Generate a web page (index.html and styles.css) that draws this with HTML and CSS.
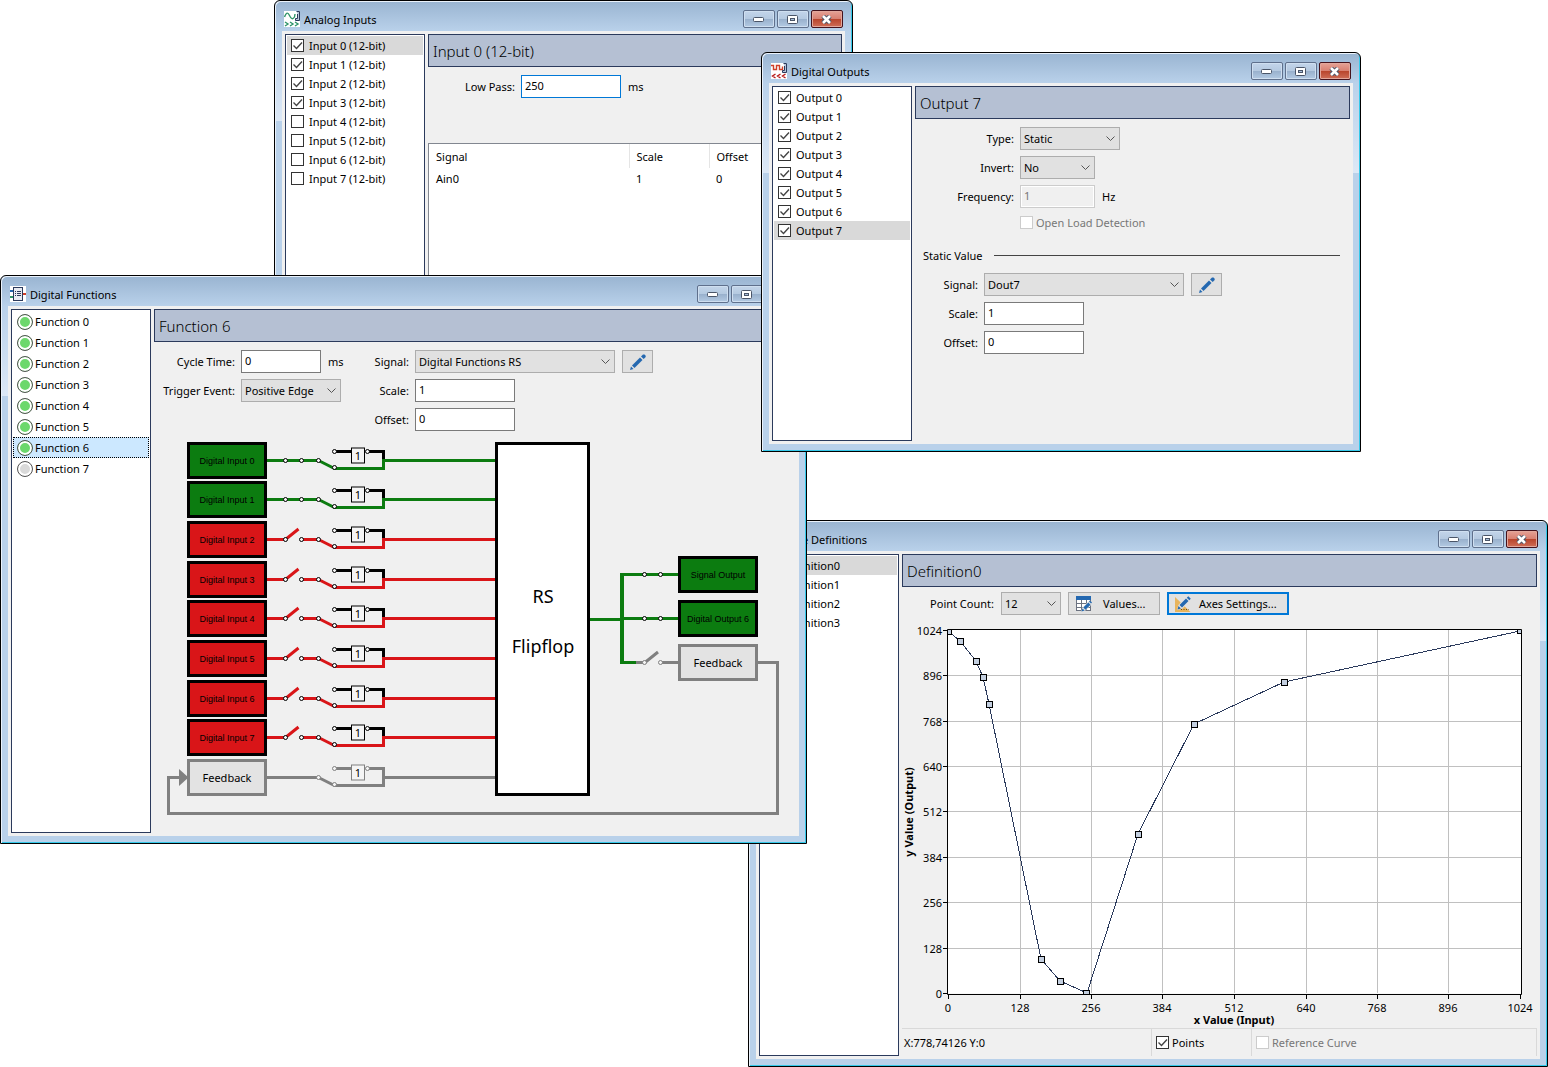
FILE: index.html
```html
<!DOCTYPE html>
<html lang="en">
<head>
    <meta charset="utf-8">
    <title>I/O Configuration</title>
    <link rel="stylesheet" href="styles.css">
</head>
<body>
    <!-- Shared icons -->
    <svg class="sprite" aria-hidden="true">
        <symbol id="icon-min" viewBox="0 0 11 5"><rect x="0.5" y="0.5" width="10" height="4" rx="1" fill="#fff" stroke="#4a5568"/></symbol>
        <symbol id="icon-max" viewBox="0 0 11 9"><rect x="0.5" y="0.5" width="10" height="8" rx="1" fill="#fff" stroke="#4a5568"/><rect x="3.5" y="3.5" width="4" height="2" fill="#a9bfda" stroke="#4a5568"/></symbol>
        <symbol id="icon-close" viewBox="0 0 11 9"><path d="M2 1.2l7 6.6M9 1.2l-7 6.6" stroke="#4a5568" stroke-width="4.600"/><path d="M2 1l7 7M9 1l-7 7" stroke="#fff" stroke-width="2.600"/></symbol>
        <symbol id="icon-pencil" viewBox="0 0 16 16"><path d="M0 16l1-3.500 2.500 2.500z" fill="#2468b0"/><path d="M2 11.500l8-8 2.500 2.500-8 8z" fill="#2468b0"/><path d="M11 2.500L13 0.500h1.500l1.200 1.200V3l-2 2z" fill="#2468b0"/></symbol>
        <symbol id="switch-wires" viewBox="0 0 350 40" overflow="visible">
            <path d="M180 -9h17M215 -9h14.500V0" class="wire-bypass"/>
            <path d="M164.500 0L180.500 8H229.500V0H341" class="wire"/>
            <rect x="197.500" y="-12.500" width="13" height="15" class="inverter"/>
            <circle cx="164.500" cy="0" r="2" class="node"/>
            <circle cx="180.500" cy="-9" r="2" class="node"/>
            <circle cx="180.500" cy="7" r="2" class="node"/>
            <circle cx="213.500" cy="-9" r="2" class="node"/>
        </symbol>
        <symbol id="input-closed" overflow="visible">
            <rect x="34.500" y="-17" width="77" height="34" class="block"/>
            <path d="M113 0H164.500" class="wire"/>
            <use href="#switch-wires" width="350" height="40"/>
            <circle cx="131.500" cy="0" r="2" class="node"/>
            <circle cx="147.500" cy="0" r="2" class="node"/>
        </symbol>
        <symbol id="input-open" overflow="visible">
            <rect x="34.500" y="-17" width="77" height="34" class="block"/>
            <path d="M113 0H131.500L144.500 -10.500M147.500 0H164.500" class="wire"/>
            <use href="#switch-wires" width="350" height="40"/>
            <circle cx="131.500" cy="0" r="2" class="node"/>
            <circle cx="147.500" cy="0" r="2" class="node"/>
        </symbol>
    </svg>

    <main class="desktop">
        <!-- Analog Inputs -->
        <section class="window window-analog">
            <header class="titlebar">
                <svg class="title-icon" viewBox="0 0 16 16"><rect width="16" height="16" fill="#fff"/><path d="M0.500 6Q3 -1 5.500 4.500T10.500 6L11 3" fill="none" stroke="#2f9468" stroke-width="1.400"/><path d="M12.500 0.500h3v9h-4v-2h2V3" fill="#b8c4d8" stroke="#2b3a5c"/><path d="M1 11l3 2-3 2M6 11l3 2-3 2M11 11l3 2-3 2" fill="none" stroke="#2f9468" stroke-width="1.400"/></svg>
                <h1>Analog Inputs</h1>
                <div class="window-buttons">
                    <button aria-label="Minimize"><svg width="11" height="5"><use href="#icon-min"/></svg></button>
                    <button aria-label="Maximize"><svg width="11" height="9"><use href="#icon-max"/></svg></button>
                    <button class="close" aria-label="Close"><svg width="11" height="9"><use href="#icon-close"/></svg></button>
                </div>
            </header>
            <div class="content">
                <div class="list">
                    <label class="check-row selected"><input type="checkbox" checked>Input 0 (12-bit)</label>
                    <label class="check-row"><input type="checkbox" checked>Input 1 (12-bit)</label>
                    <label class="check-row"><input type="checkbox" checked>Input 2 (12-bit)</label>
                    <label class="check-row"><input type="checkbox" checked>Input 3 (12-bit)</label>
                    <label class="check-row"><input type="checkbox">Input 4 (12-bit)</label>
                    <label class="check-row"><input type="checkbox">Input 5 (12-bit)</label>
                    <label class="check-row"><input type="checkbox">Input 6 (12-bit)</label>
                    <label class="check-row"><input type="checkbox">Input 7 (12-bit)</label>
                </div>
                <div class="panel">
                    <h2>Input 0 (12-bit)</h2>
                    <div class="form form-analog">
                        <label for="low-pass">Low Pass:</label>
                        <div class="field"><input type="text" id="low-pass" class="active" value="250"> ms</div>
                    </div>
                    <div class="table-box">
                        <table>
                            <thead>
                                <tr><th class="col-signal">Signal</th><th class="col-number">Scale</th><th>Offset</th></tr>
                            </thead>
                            <tbody>
                                <tr><td>Ain0</td><td>1</td><td>0</td></tr>
                            </tbody>
                        </table>
                    </div>
                </div>
            </div>
        </section>

        <!-- Curve Definitions -->
        <section class="window window-curve">
            <header class="titlebar">
                <svg class="title-icon" viewBox="0 0 16 16"><rect width="16" height="16" fill="#fff"/><path d="M2 1v13h13M3 12Q8 12 13 3" fill="none" stroke="#2b3a5c"/></svg>
                <h1>Curve Definitions</h1>
                <div class="window-buttons">
                    <button aria-label="Minimize"><svg width="11" height="5"><use href="#icon-min"/></svg></button>
                    <button aria-label="Maximize"><svg width="11" height="9"><use href="#icon-max"/></svg></button>
                    <button class="close" aria-label="Close"><svg width="11" height="9"><use href="#icon-close"/></svg></button>
                </div>
            </header>
            <div class="content">
                <div class="list">
                    <label class="check-row selected"><input type="checkbox" checked>Definition0</label>
                    <label class="check-row"><input type="checkbox">Definition1</label>
                    <label class="check-row"><input type="checkbox">Definition2</label>
                    <label class="check-row"><input type="checkbox">Definition3</label>
                </div>
                <div class="panel">
                    <h2>Definition0</h2>
                    <div class="toolbar">
                        <label for="point-count">Point Count:</label>
                        <select id="point-count" class="w60"><option>12</option></select>
                        <button class="button values">
                            <svg width="16" height="16" viewBox="0 0 16 16"><rect x="0.500" y="0.500" width="14" height="14" fill="#fff" stroke="#6b7280"/><rect width="15" height="4" fill="#2468b0"/><path d="M0 7.500h15M0 11.500h15M5.500 4v11M10.500 4v11" stroke="#6b7280"/><path d="M5 16l1.500-4.500 7-7 3 3-7 7z" fill="#e1e1e1"/><path d="M5.500 15.500l1-3 2 2zM7.300 11.500l5-5 2.200 2.200-5 5zM13 5.500l1-1 2 2-1 1z" fill="#2468b0"/></svg>
                            <span>Values...</span>
                        </button>
                        <button class="button default">
                            <svg width="16" height="16" viewBox="0 0 16 16"><path d="M0 1l15.500 15H0z" fill="#e8b45c"/><path d="M6 13.500h8" stroke="#5c4a20" stroke-dasharray="1 1.500"/><path d="M2 14l1.500-5 8-9 4.500 4-8.500 8.500z" fill="#e1e1e1"/><path d="M2.500 13.500l1-3.500 2.500 2.500zM4.500 9l6.500-6.500 2.500 2.500L7 11.500zM11.800 1.700L13.300 0.200l2.500 2.500-1.500 1.500z" fill="#2468b0"/></svg>
                            <span>Axes Settings...</span>
                        </button>
                    </div>
                    <svg class="chart" width="635" height="413" viewBox="0 0 635 413">
                        <clipPath id="plot-clip"><rect x="46" y="15" width="573" height="364"/></clipPath>
                        <rect x="45.500" y="14.500" width="574" height="364" fill="#fff"/>
                        <path class="grid" d="M118.500 15V378M189.500 15V378M260.500 15V378M332.500 15V378M404.500 15V378M475.500 15V378M546.500 15V378M46 60.500H619M46 106.500H619M46 151.500H619M46 196.500H619M46 242.500H619M46 287.500H619M46 333.500H619"/>
                        <g clip-path="url(#plot-clip)">
                            <polyline class="curve" points="46,16 58,26 74,46 81,62 87,89 139,344 158,366 185,378 236,219 292,109 382,67 618,16"/>
                            <g class="points">
                                <rect x="43.500" y="13.500" width="6" height="6"/>
                                <rect x="55.500" y="23.500" width="6" height="6"/>
                                <rect x="71.500" y="43.500" width="6" height="6"/>
                                <rect x="78.500" y="59.500" width="6" height="6"/>
                                <rect x="84.500" y="86.500" width="6" height="6"/>
                                <rect x="136.500" y="341.500" width="6" height="6"/>
                                <rect x="155.500" y="363.500" width="6" height="6"/>
                                <rect x="181.500" y="375.500" width="6" height="6"/>
                                <rect x="233.500" y="216.500" width="6" height="6"/>
                                <rect x="289.500" y="106.500" width="6" height="6"/>
                                <rect x="379.500" y="64.500" width="6" height="6"/>
                                <rect x="615.500" y="12.500" width="6" height="6"/>
                            </g>
                        </g>
                        <path class="axis" d="M45.500 14.500H619.500V379.500H45.500zM41 15.500h5M41 60.500h5M41 106.500h5M41 151.500h5M41 196.500h5M41 242.500h5M41 287.500h5M41 333.500h5M41 378.500h5M46.500 379v5M118.500 379v5M189.500 379v5M260.500 379v5M332.500 379v5M404.500 379v5M475.500 379v5M546.500 379v5M618.500 379v5"/>
                        <g class="y-labels">
                            <text x="40" y="20">1024</text>
                            <text x="40" y="65">896</text>
                            <text x="40" y="111">768</text>
                            <text x="40" y="156">640</text>
                            <text x="40" y="201">512</text>
                            <text x="40" y="247">384</text>
                            <text x="40" y="292">256</text>
                            <text x="40" y="338">128</text>
                            <text x="40" y="383">0</text>
                        </g>
                        <g class="x-labels">
                            <text x="46" y="397">0</text>
                            <text x="118" y="397">128</text>
                            <text x="189" y="397">256</text>
                            <text x="260" y="397">384</text>
                            <text x="332" y="397">512</text>
                            <text x="404" y="397">640</text>
                            <text x="475" y="397">768</text>
                            <text x="546" y="397">896</text>
                            <text x="618" y="397">1024</text>
                        </g>
                        <text class="axis-title" x="332" y="409">x Value (Input)</text>
                        <text class="axis-title" transform="translate(11 197) rotate(-90)">y Value (Output)</text>
                    </svg>
                    <footer class="statusbar">
                        <span class="position">X:778,74126 Y:0</span>
                        <label class="status-points"><input type="checkbox" checked>Points</label>
                        <label class="status-reference disabled"><input type="checkbox" disabled>Reference Curve</label>
                    </footer>
                </div>
            </div>
        </section>

        <!-- Digital Functions -->
        <section class="window window-functions">
            <header class="titlebar">
                <svg class="title-icon" viewBox="0 0 16 16"><rect width="16" height="16" fill="#fff"/><path d="M0 5h3" stroke="#2468b0" stroke-width="2"/><path d="M0 11h3" stroke="#2f9468" stroke-width="2"/><path d="M13 8h3" stroke="#d0402a" stroke-width="2"/><rect x="3.500" y="1.500" width="9" height="13" fill="#e8ebf2" stroke="#2b3a5c"/><path d="M5 5.500h1M7 5.500h4M5 7.500h1M7 7.500h4M5 9.500h1M7 9.500h4" stroke="#2b3a5c"/></svg>
                <h1>Digital Functions</h1>
                <div class="window-buttons">
                    <button aria-label="Minimize"><svg width="11" height="5"><use href="#icon-min"/></svg></button>
                    <button aria-label="Maximize"><svg width="11" height="9"><use href="#icon-max"/></svg></button>
                    <button class="close" aria-label="Close"><svg width="11" height="9"><use href="#icon-close"/></svg></button>
                </div>
            </header>
            <div class="content">
                <ul class="list">
                    <li class="function-row"><i class="lamp on"></i>Function 0</li>
                    <li class="function-row"><i class="lamp on"></i>Function 1</li>
                    <li class="function-row"><i class="lamp on"></i>Function 2</li>
                    <li class="function-row"><i class="lamp on"></i>Function 3</li>
                    <li class="function-row"><i class="lamp on"></i>Function 4</li>
                    <li class="function-row"><i class="lamp on"></i>Function 5</li>
                    <li class="function-row focused"><i class="lamp on"></i>Function 6</li>
                    <li class="function-row"><i class="lamp"></i>Function 7</li>
                </ul>
                <div class="panel">
                    <h2>Function 6</h2>
                    <div class="form form-functions">
                        <label for="cycle-time">Cycle Time:</label>
                        <div class="field"><input type="text" id="cycle-time" class="w80" value="0"> ms</div>
                        <label for="fn-signal">Signal:</label>
                        <div class="field">
                            <select id="fn-signal" class="w200"><option>Digital Functions RS</option></select>
                            <button class="button icon-only" aria-label="Edit signal"><svg width="16" height="16"><use href="#icon-pencil"/></svg></button>
                        </div>
                        <label for="trigger-event">Trigger Event:</label>
                        <div class="field"><select id="trigger-event"><option>Positive Edge</option></select></div>
                        <label for="fn-scale">Scale:</label>
                        <div class="field"><input type="text" id="fn-scale" value="1"></div>
                        <label for="fn-offset" class="second-column">Offset:</label>
                        <div class="field"><input type="text" id="fn-offset" value="0"></div>
                    </div>
                    <svg class="diagram" width="642" height="396" viewBox="0 0 642 396">
                        <!-- feedback loop -->
                        <path class="wire off" d="M604 225.500H623.500V376.500H14.500V340.500H26"/>
                        <path d="M25 332l9.500 8.500-9.500 8.500z" fill="#808080"/>

                        <g class="on"><use href="#input-closed" y="23.500"/><text class="block-text" x="73" y="27">Digital Input 0</text></g>
                        <g class="on"><use href="#input-closed" y="62.500"/><text class="block-text" x="73" y="66">Digital Input 1</text></g>
                        <g class="alert"><use href="#input-open" y="102.500"/><text class="block-text" x="73" y="106">Digital Input 2</text></g>
                        <g class="alert"><use href="#input-open" y="142.500"/><text class="block-text" x="73" y="146">Digital Input 3</text></g>
                        <g class="alert"><use href="#input-open" y="181.500"/><text class="block-text" x="73" y="185">Digital Input 4</text></g>
                        <g class="alert"><use href="#input-open" y="221.500"/><text class="block-text" x="73" y="225">Digital Input 5</text></g>
                        <g class="alert"><use href="#input-open" y="261.500"/><text class="block-text" x="73" y="265">Digital Input 6</text></g>
                        <g class="alert"><use href="#input-open" y="300.500"/><text class="block-text" x="73" y="304">Digital Input 7</text></g>
                        <g class="off">
                            <rect x="34.500" y="323.500" width="77" height="34" class="block"/>
                            <path d="M113 340.500H164.500" class="wire"/>
                            <use href="#switch-wires" y="340.500" width="350" height="40"/>
                            <text class="feedback-text" x="73" y="345">Feedback</text>
                        </g>
                        <g class="inverter-text">
                            <text x="204" y="23">1</text>
                            <text x="204" y="62">1</text>
                            <text x="204" y="102">1</text>
                            <text x="204" y="142">1</text>
                            <text x="204" y="181">1</text>
                            <text x="204" y="221">1</text>
                            <text x="204" y="261">1</text>
                            <text x="204" y="300">1</text>
                            <text x="204" y="340">1</text>
                        </g>

                        <!-- function block -->
                        <rect x="342.500" y="6.500" width="92" height="351" fill="#fff" stroke="#000" stroke-width="3"/>
                        <text class="function-text" x="389" y="166">RS</text>
                        <text class="function-text" x="389" y="216">Flipflop</text>

                        <!-- outputs -->
                        <g class="on">
                            <path class="wire" d="M436 182.500H468M466 137.500H524M466 181.500H524M466 225.500H482"/>
                            <path class="trunk" d="M468 136V227"/>
                            <rect x="525.500" y="120.500" width="77" height="34" class="block"/>
                            <rect x="525.500" y="164.500" width="77" height="34" class="block"/>
                            <circle cx="490.500" cy="137.500" r="2" class="node"/>
                            <circle cx="506.500" cy="137.500" r="2" class="node"/>
                            <circle cx="490.500" cy="181.500" r="2" class="node"/>
                            <circle cx="506.500" cy="181.500" r="2" class="node"/>
                            <text class="block-text" x="564" y="141">Signal Output</text>
                            <text class="block-text" x="564" y="185">Digital Output 6</text>
                        </g>
                        <g class="off">
                            <path class="wire" d="M482 225.500H491L504 215M506.500 225.500H525"/>
                            <rect x="525.500" y="208.500" width="77" height="34" class="block"/>
                            <circle cx="490.500" cy="225.500" r="2" class="node"/>
                            <circle cx="506.500" cy="225.500" r="2" class="node"/>
                            <text class="feedback-text" x="564" y="230">Feedback</text>
                        </g>
                    </svg>
                </div>
            </div>
        </section>

        <!-- Digital Outputs -->
        <section class="window window-outputs">
            <header class="titlebar">
                <svg class="title-icon" viewBox="0 0 16 16"><rect width="16" height="16" fill="#fff"/><path d="M0 2.500h2.500v4h3v-4h3v4h3v-3" fill="none" stroke="#d0402a" stroke-width="1.400"/><path d="M12.500 0.500h3v9h-4v-2h2V3" fill="#b8c4d8" stroke="#2b3a5c"/><path d="M4.500 11l-3 2 3 2M9.500 11l-3 2 3 2M14.500 11l-3 2 3 2" fill="none" stroke="#b81c1c" stroke-width="1.400"/></svg>
                <h1>Digital Outputs</h1>
                <div class="window-buttons">
                    <button aria-label="Minimize"><svg width="11" height="5"><use href="#icon-min"/></svg></button>
                    <button aria-label="Maximize"><svg width="11" height="9"><use href="#icon-max"/></svg></button>
                    <button class="close" aria-label="Close"><svg width="11" height="9"><use href="#icon-close"/></svg></button>
                </div>
            </header>
            <div class="content">
                <div class="list">
                    <label class="check-row"><input type="checkbox" checked>Output 0</label>
                    <label class="check-row"><input type="checkbox" checked>Output 1</label>
                    <label class="check-row"><input type="checkbox" checked>Output 2</label>
                    <label class="check-row"><input type="checkbox" checked>Output 3</label>
                    <label class="check-row"><input type="checkbox" checked>Output 4</label>
                    <label class="check-row"><input type="checkbox" checked>Output 5</label>
                    <label class="check-row"><input type="checkbox" checked>Output 6</label>
                    <label class="check-row selected"><input type="checkbox" checked>Output 7</label>
                </div>
                <div class="panel">
                    <h2>Output 7</h2>
                    <div class="form form-type">
                        <label for="type">Type:</label>
                        <div class="field"><select id="type"><option>Static</option></select></div>
                        <label for="invert">Invert:</label>
                        <div class="field"><select id="invert" class="w75"><option>No</option></select></div>
                        <label for="frequency">Frequency:</label>
                        <div class="field"><input type="text" id="frequency" class="w75" value="1" disabled> Hz</div>
                        <label class="open-load disabled"><input type="checkbox" disabled>Open Load Detection</label>
                    </div>
                    <h3>Static Value</h3>
                    <div class="form form-static">
                        <label for="out-signal">Signal:</label>
                        <div class="field">
                            <select id="out-signal" class="w200"><option>Dout7</option></select>
                            <button class="button icon-only" aria-label="Edit signal"><svg width="16" height="16"><use href="#icon-pencil"/></svg></button>
                        </div>
                        <label for="out-scale">Scale:</label>
                        <div class="field"><input type="text" id="out-scale" value="1"></div>
                        <label for="out-offset">Offset:</label>
                        <div class="field"><input type="text" id="out-offset" value="0"></div>
                    </div>
                </div>
            </div>
        </section>
    </main>
</body>
</html>
```
FILE: styles.css
```css
* {
    box-sizing: border-box;
}

body {
    margin: 0;
    background-color: #fff;
    color: #000;
    font-family: "Noto Sans", "Open Sans", sans-serif;
    font-size: 11px;
    line-height: 17px;
}

.sprite {
    position: absolute;
    width: 0;
    height: 0;
}

.desktop {
    position: relative;
    height: 100vh;
    overflow: hidden;
}

/* Windows */
.window {
    position: absolute;
    display: flex;
    flex-direction: column;
    padding: 0 7px 7px;
    border: 1px solid #000;
    border-radius: 6px 6px 0 0;
    background: linear-gradient(#99b4d1, #b9d1ea 30px, #dce8f6 120px, #b9d1ea 120px);
    box-shadow: inset 1px 1px #eaf2fb, inset -1px -1px #35c9ea;
}

.window-analog {
    left: 274px;
    top: 0;
    width: 579px;
    height: 300px;
}

.window-curve {
    left: 748px;
    top: 520px;
    width: 800px;
    height: 547px;
}

.window-functions {
    left: 0;
    top: 275px;
    width: 807px;
    height: 569px;
}

.window-outputs {
    left: 761px;
    top: 52px;
    width: 600px;
    height: 400px;
}

.titlebar {
    display: flex;
    align-items: center;
    gap: 4px;
    height: 30px;
    padding: 7px 2px 1px;
}

.title-icon {
    width: 16px;
    height: 16px;
}

.titlebar h1 {
    flex: 1;
    margin: 0;
    font-size: 11px;
    font-weight: normal;
}

.window-buttons {
    display: flex;
    gap: 2px;
}

.window-buttons button {
    display: flex;
    align-items: center;
    justify-content: center;
    width: 32px;
    height: 18px;
    padding: 0 1px 0 0;
    border: 1px solid #5f708c;
    border-radius: 2px;
    background: linear-gradient(#c3d5ea, #b4c9e0 50%, #98b0cc 50%, #b3cae3);
    box-shadow: inset 0 0 0 1px #cfdff0;
}

.window-buttons .close {
    border-color: #45121c;
    background: linear-gradient(#e5a296, #d87f70 50%, #b8432b 50%, #cf6e58);
    box-shadow: inset 0 0 0 1px #e2a79c;
}

.content {
    flex: 1;
    display: flex;
    gap: 3px;
    min-height: 0;
    padding: 3px;
    background-color: #f0f0f0;
}

/* Lists */
.list {
    flex: 0 0 140px;
    margin: 0;
    padding: 1px;
    border: 1px solid #2b3a5c;
    background-color: #fff;
    list-style: none;
}

.check-row {
    display: flex;
    align-items: center;
    gap: 5px;
    height: 19px;
    padding-left: 4px;
}

.selected {
    background-color: #d9d9d9;
}

.function-row {
    display: flex;
    align-items: center;
    gap: 2px;
    height: 21px;
    padding: 0 3px;
    border: 1px solid transparent;
}

.focused {
    border: 1px dotted #000;
    background-color: #cce8ff;
}

.lamp {
    width: 16px;
    height: 16px;
    border: 1px solid #555;
    border-radius: 50%;
    background-color: #d9d9d9;
    box-shadow: inset 0 0 0 2px #fff;
}

.lamp.on {
    background-color: #6cd86c;
}

/* Panels */
.panel {
    flex: 1;
    display: flex;
    flex-direction: column;
    min-width: 0;
}

.panel h2 {
    height: 33px;
    margin: 0;
    padding-left: 4px;
    border: 1px solid #2b3a5c;
    background-color: #b5c0d3;
    font-size: 15px;
    font-weight: 300;
    line-height: 32px;
}

.panel h3 {
    display: flex;
    align-items: center;
    gap: 11px;
    margin: 16px 10px 9px 8px;
    font-size: 11px;
    font-weight: normal;
}

.panel h3::after {
    content: "";
    flex: 1;
    border-top: 1px solid #444;
}

/* Forms */
.form {
    display: grid;
    gap: 6px;
    align-items: center;
}

.form > label {
    text-align: right;
}

.form-analog {
    grid-template-columns: 87px 1fr;
    padding: 8px 0 45px;
}

.form-functions {
    grid-template-columns: 81px 102px 60px 1fr;
    padding-top: 8px;
}

.form-functions .second-column {
    grid-column: 3;
}

.form-type {
    grid-template-columns: 99px 1fr;
    padding-top: 8px;
}

.form-static {
    grid-template-columns: 63px 1fr;
}

.field {
    display: flex;
    align-items: center;
    gap: 7px;
}

.form .open-load {
    display: flex;
    align-items: center;
    gap: 3px;
    grid-column: 2;
}

.disabled {
    color: #777;
}

input,
select,
button {
    margin: 0;
    color: inherit;
    font-family: inherit;
    font-size: 11px;
}

input[type="text"] {
    width: 100px;
    height: 23px;
    padding: 0 3px 2px;
    border: 1px solid #7a7a7a;
    background-color: #fff;
}

input[type="text"].active {
    border-color: #0078d7;
    outline: none;
}

input[type="text"]:disabled {
    border-color: #ccc;
    background-color: #f0f0f0;
    box-shadow: inset 0 0 0 1px #fff;
    color: #777;
}

select {
    width: 100px;
    height: 23px;
    padding: 0 16px 0 3px;
    border: 1px solid #adadad;
    border-radius: 0;
    background: #e1e1e1 url("data:image/svg+xml,%3Csvg xmlns='http://www.w3.org/2000/svg' width='9' height='6'%3E%3Cpath d='M.5 .5l4 4 4-4' fill='none' stroke='%23555'/%3E%3C/svg%3E") no-repeat right 4px center;
    appearance: none;
}

input[type="text"].w80 {
    width: 80px;
}

.w60 {
    width: 60px;
}

.w75,
input[type="text"].w75 {
    width: 75px;
}

.w200 {
    width: 200px;
}

input[type="checkbox"] {
    flex: none;
    width: 13px;
    height: 13px;
    border: 1px solid #333;
    background: #fff no-repeat center;
    appearance: none;
}

input[type="checkbox"]:checked {
    background-image: url("data:image/svg+xml,%3Csvg xmlns='http://www.w3.org/2000/svg' width='11' height='11'%3E%3Cpath d='M1.500 5.500l3 3 5.500-6' fill='none' stroke='%23444' stroke-width='1.400'/%3E%3C/svg%3E");
}

input[type="checkbox"]:disabled {
    border-color: #ccc;
}

.button {
    display: flex;
    align-items: center;
    gap: 11px;
    height: 23px;
    padding: 0 0 0 7px;
    border: 1px solid #adadad;
    background-color: #e1e1e1;
}

.button.values {
    width: 92px;
}

.button.default {
    width: 122px;
    border: 2px solid #0078d7;
    padding-left: 6px;
    gap: 8px;
}

.button.icon-only {
    justify-content: center;
    width: 31px;
    padding: 0;
}

/* Signal table */
.table-box {
    flex: 1;
    border: 1px solid #828790;
    background-color: #fff;
}

table {
    width: 100%;
    border-collapse: collapse;
    table-layout: fixed;
}

th,
td {
    height: 20px;
    padding: 0 7px;
    font-weight: normal;
    text-align: left;
}

th {
    height: 24px;
    border-right: 1px solid #e5e5e5;
}

th:last-child {
    border-right: none;
}

.col-signal {
    width: 200px;
}

.col-number {
    width: 80px;
}

/* Curve editor */
.toolbar {
    display: flex;
    align-items: center;
    gap: 7px;
    padding: 5px 0 0 24px;
}

.toolbar label {
    width: 68px;
    text-align: right;
}

.chart,
.diagram {
    display: block;
    flex: none;
}

.grid {
    stroke: #c0c0c0;
}

.curve {
    fill: none;
    stroke: #2b3a5c;
    shape-rendering: crispEdges;
}

.points rect {
    fill: #c3cfe0;
    stroke: #000;
}

.axis {
    fill: none;
    stroke: #000;
}

.y-labels {
    text-anchor: end;
}

.x-labels,
.axis-title {
    text-anchor: middle;
}

.axis-title {
    font-weight: bold;
}

.statusbar {
    flex: 1;
    display: flex;
    border-top: 1px solid #d9d9d9;
}

.statusbar > * {
    display: flex;
    align-items: center;
    gap: 3px;
    padding-left: 4px;
    border-right: 1px solid #d9d9d9;
}

.statusbar .position {
    flex: 0 0 250px;
    padding-left: 2px;
}

.status-points {
    flex: 0 0 100px;
}

.status-reference {
    flex: 1;
}

/* Function diagram */
.diagram {
    margin-top: 6px;
}

.on {
    --wire: #0c7c10;
    --fill: #0c7c10;
}

.alert {
    --wire: #d91518;
    --fill: #d91518;
}

.off {
    --wire: #808080;
    --fill: #e3e3e3;
    --edge: #808080;
}

.block {
    fill: var(--fill);
    stroke: var(--edge, #000);
    stroke-width: 3;
}

.wire {
    fill: none;
    stroke: var(--wire);
    stroke-width: 3;
}

.wire-bypass {
    fill: none;
    stroke: var(--edge, #000);
    stroke-width: 3;
}

.trunk {
    stroke: var(--wire);
    stroke-width: 4;
}

.node,
.inverter {
    fill: #f5f5f5;
    stroke: var(--edge, #000);
}

.inverter-text,
.block-text,
.feedback-text,
.function-text {
    text-anchor: middle;
}

.block-text {
    font-family: "Liberation Sans", Arial, sans-serif;
    font-size: 9px;
}

.function-text {
    font-size: 18px;
}
```
